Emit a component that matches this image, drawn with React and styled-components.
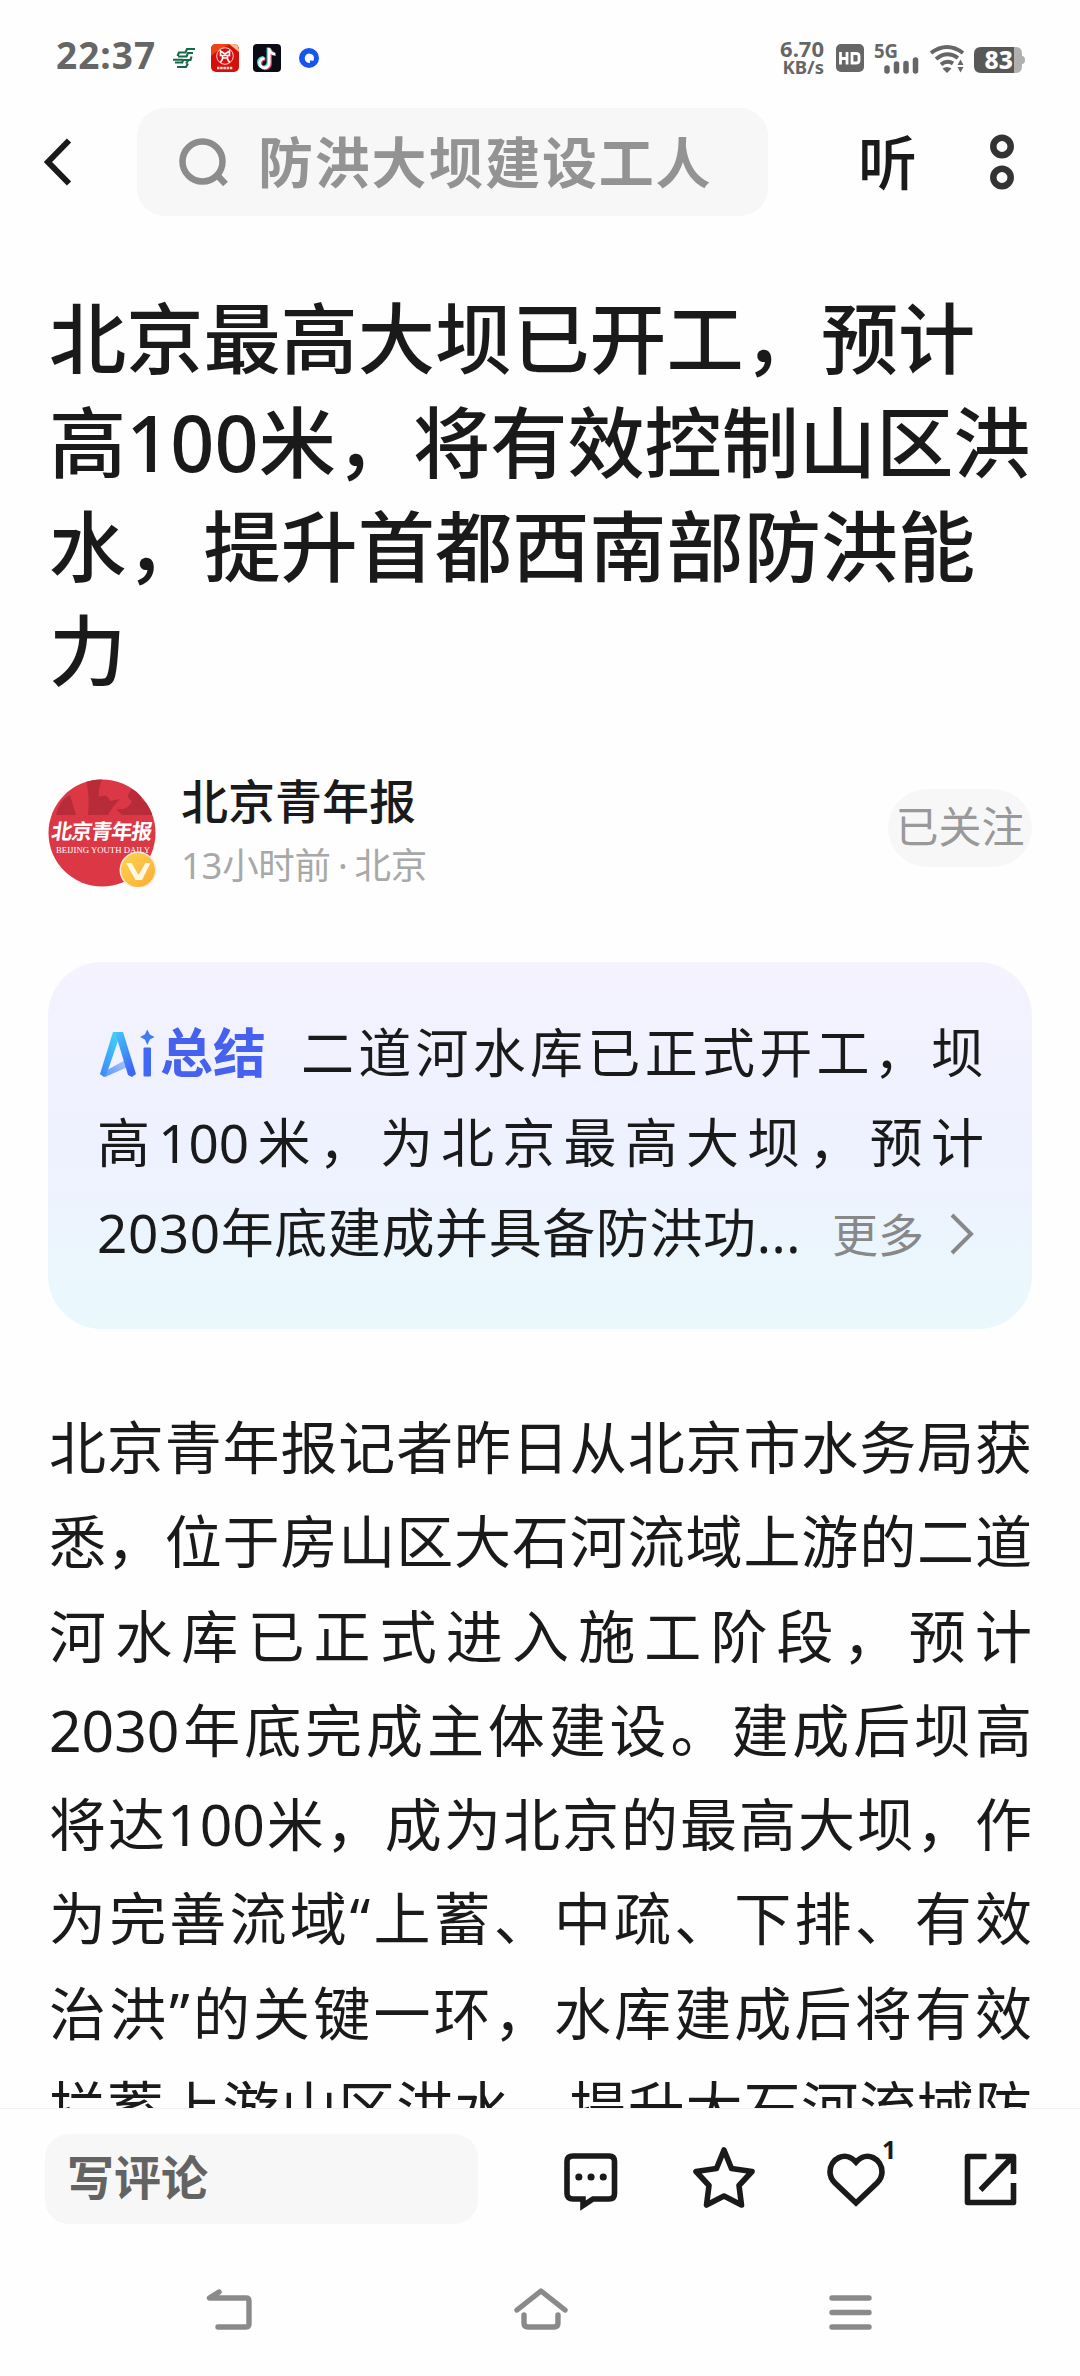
import React from 'react';
import styled, { createGlobalStyle } from 'styled-components';

const GlobalStyle = createGlobalStyle`
  body {
    margin: 0;
    background: #fefefe;
    font-family: 'Noto Sans', 'Noto Sans CJK SC', sans-serif;
    color: #1a1a1a;
  }
`
const Screen = styled.div`
  width: 1080px;
  height: 2376px;
  display: flex;
  flex-direction: column;
  overflow: hidden;
`
const StatusBar = styled.div`
  height: 78px;
  flex: none;
  box-sizing: border-box;
  padding: 0 55px 0 56px;
  display: flex;
  justify-content: space-between;
  color: #666;
`
const StatusSide = styled.div`
  display: flex;
  align-items: flex-start;
`
const Clock = styled.div`
  width: 117px;
  margin-top: 37px;
  font-size: 37px;
  font-weight: 700;
  line-height: 36px;
  letter-spacing: 1px;
`
const StatusIcon = styled.svg`
  display: block;
  flex: none;
  width: ${props => props.$w}px;
  height: ${props => props.$h}px;
  margin-left: ${props => props.$gap || 0}px;
  margin-top: ${props => props.$top}px;
  overflow: visible;
`
const Speed = styled.div`
  margin-top: 38px;
  width: 46px;
  text-align: right;
  font-size: 22px;
  line-height: 20px;
  font-weight: 700;
  white-space: nowrap;
`
const SpeedUnit = styled.div`
  font-size: 18.5px;
  line-height: 18px;
`
const Header = styled.div`
  height: 168px;
  flex: none;
  box-sizing: border-box;
  padding: 30px 66px 30px 43px;
  display: flex;
  align-items: center;
`
const SearchBox = styled.div`
  width: 631px;
  height: 108px;
  margin-left: 65px;
  box-sizing: border-box;
  padding-left: 42px;
  border-radius: 28px;
  background: #f7f7f7;
  display: flex;
  align-items: center;
  gap: 29px;
  font-size: 55px;
  font-weight: 700;
  letter-spacing: 1.8px;
  line-height: 108px;
  color: #939393;

  svg {
    margin-bottom: 1px;
  }
`
const Listen = styled.div`
  margin-left: 90px;
  width: 59px;
  font-size: 59px;
  line-height: 106px;
  font-weight: 500;
`
const MoreDots = styled.svg`
  display: block;
  margin-left: auto;
`
const Title = styled.h1`
  margin: 40px 48px 0 49px;
  font-size: 77.2px;
  line-height: 104px;
  font-weight: 500;
  flex: none;
`
const Line = styled.span`
  display: block;
  white-space: nowrap;
  text-align-last: ${props => props.$spread ? 'justify' : 'left'};
`
const Author = styled.div`
  margin: 77px 48px 0;
  height: 108px;
  flex: none;
  display: flex;
  align-items: center;
`
const AuthorText = styled.div`
  flex: 1;
  margin-left: 25px;
`
const AuthorName = styled.div`
  font-size: 47px;
  line-height: 64px;
  font-weight: 500;
`
const Posted = styled.div`
  font-size: 36.5px;
  line-height: 64px;
  letter-spacing: -0.3px;
  word-spacing: -2px;
  color: #a8a8a8;
`
const FollowButton = styled.div`
  width: 144px;
  height: 78px;
  margin-bottom: 11px;
  border-radius: 39px;
  background: #f7f7f7;
  color: #999;
  font-size: 43px;
  line-height: 75px;
  text-align: center;
  white-space: nowrap;
`
const Summary = styled.section`
  margin: 75px 48px 0;
  height: 367px;
  flex: none;
  box-sizing: border-box;
  padding: 46px 48px 0 49px;
  border-radius: 54px;
  background: linear-gradient(#f4f3fe 0%, #eff1fe 45%, #edf3fe 65%, #eaf7fc 88%, #eaf8fc 100%);
  font-size: 53px;
  line-height: 90px;
`
const SummaryRow = styled.div`
  display: flex;
  height: 90px;
`
const SummaryLabel = styled.div`
  display: flex;
  align-items: center;
  gap: 5px;
  width: 204px;
  font-weight: 700;
  color: #4661ee;
`
const SummaryText = styled.div`
  flex: 1;
  white-space: nowrap;
  letter-spacing: ${props => props.$tight ? '0.6px' : '0'};
  text-align-last: ${props => props.$tight ? 'left' : 'justify'};
`
const More = styled.div`
  display: flex;
  align-items: center;
  gap: 26px;
  padding: 2px 10px 0 0;
  font-size: 46px;
  color: #888;
`
const Story = styled.article`
  margin: 71px 48px 0 49px;
  height: 708px;
  flex: none;
  overflow: hidden;
  font-size: 57px;
  line-height: 94.3px;
`
const CommentBar = styled.div`
  height: 146px;
  flex: none;
  box-sizing: border-box;
  border-top: 1px solid #f2f2f2;
  padding: 25px 62px 0 45px;
  display: flex;
  align-items: flex-start;
`
const CommentInput = styled.div`
  width: 433px;
  height: 90px;
  box-sizing: border-box;
  padding-left: 22px;
  margin-right: 84px;
  border-radius: 24px;
  background: #f7f7f7;
  color: #636363;
  font-size: 47px;
  font-weight: 700;
  line-height: 86px;
`
const Actions = styled.div`
  flex: 1;
  height: 90px;
  display: flex;
  justify-content: space-between;
`
const ActionIcon = styled.svg`
  display: block;
  width: 66px;
  height: 90px;
  fill: none;
  stroke: #1a1a1a;
  stroke-width: 5.6px;
  overflow: visible;
`
const LikeButton = styled.div`
  position: relative;
`
const LikeCount = styled.span`
  position: absolute;
  left: 60px;
  top: 3px;
  font-size: 25px;
  line-height: 24px;
  font-weight: 700;
`
const NavBar = styled.div`
  flex: 1;
  display: flex;
  justify-content: space-between;
  padding: 31px 202px 0 203px;
`
const NavIcon = styled.svg`
  display: block;
  width: 54px;
  height: 54px;
  fill: none;
  stroke: #8a8a8a;
  stroke-width: 5.4px;
  stroke-linecap: round;
  stroke-linejoin: round;
`

const storyLines = [
  '北京青年报记者昨日从北京市水务局获',
  '悉，位于房山区大石河流域上游的二道',
  '河水库已正式进入施工阶段，预计',
  '2030年底完成主体建设。建成后坝高',
  '将达100米，成为北京的最高大坝，作',
  '为完善流域“上蓄、中疏、下排、有效',
  '治洪”的关键一环，水库建成后将有效',
  '拦蓄上游山区洪水，提升大石河流域防',
]

const titleLines = [
  '北京最高大坝已开工，预计',
  '高100米，将有效控制山区洪',
  '水，提升首都西南部防洪能',
  '力',
]

function Status() {
  return (
    <StatusBar>
      <StatusSide>
        <Clock>22:37</Clock>
        <StatusIcon viewBox="0 0 22 20" $w={22} $h={20} $top={48}>
          <path d="M22 1H14L12.500 4.500H6L4.500 8M20 5H15L13.500 8.500H5M18.500 8.500L17.500 12H10L9 15.500M0 11.800H10M2 14.500H9M15.500 12L13 15.500M4 19H13L15 15.500" fill="none" stroke="#17684b" strokeWidth="2.100" />
        </StatusIcon>
        <StatusIcon viewBox="0 0 28 28" $w={28} $h={28} $gap={16} $top={44}>
          <rect width="28" height="28" rx="5" fill="#d40f0c" />
          <path d="M0 12V5Q0 0 5 0H20Q9 4 0 12Z" fill="#ee4413" />
          <path d="M18 0H23Q28 0 28 8Z" fill="#f3c08b" />
          <circle cx="14" cy="12" r="8.300" fill="none" stroke="#fff" strokeWidth="0.8" />
          <path d="M9.500 7L14 10L18.500 7V11.500H9.500ZM11.500 12V15L9.500 18.500M16.500 12V15L18.500 18.500M11 14H17" fill="none" stroke="#fff" strokeWidth="1.600" />
          <path d="M6 24H22" stroke="#fbd0c8" strokeWidth="2.500" strokeDasharray="2.500 0.700" />
        </StatusIcon>
        <StatusIcon viewBox="0 0 28 28" $w={28} $h={28} $gap={14} $top={44}>
          <rect width="28" height="28" rx="4" fill="#0b0b15" />
          <g fill="none" strokeWidth="3.200">
            <path d="M15.200 3.500V18A4.800 4.800 0 1 1 10.500 13.500M15.200 4.500Q16.500 9 21 9.500" stroke="#43e0dc" />
            <path d="M17.200 5V19.500A4.800 4.800 0 1 1 12.500 15M17.200 5.500Q18.500 10.500 23 10.500" stroke="#ee4a68" />
            <path d="M16.200 4V18.800A4.800 4.800 0 1 1 11.500 14.300M16.200 5Q17.500 10 22 10" stroke="#fff" strokeWidth="2.700" />
          </g>
        </StatusIcon>
        <StatusIcon viewBox="0 0 20 20" $w={20} $h={20} $gap={18} $top={48}>
          <circle cx="10" cy="10" r="10" fill="#1557ee" />
          <path d="M10 5.500A4.500 4.500 0 1 0 11 15V12.500L14.500 12.800Q16.500 6 10 5.500Z" fill="#fff" />
        </StatusIcon>
      </StatusSide>
      <StatusSide>
        <Speed>6.70<SpeedUnit>KB/s</SpeedUnit></Speed>
        <StatusIcon viewBox="0 0 28 28" $w={28} $h={28} $gap={12} $top={44}>
          <rect width="28" height="28" rx="5" fill="#666" />
          <path d="M4.500 8V20.500M11 8V20.500M4.500 14.500H11M16 9.500H20Q23 9.500 23 12V16.500Q23 19 20 19H16Z" fill="none" stroke="#fff" strokeWidth="2.800" />
        </StatusIcon>
        <StatusIcon viewBox="0 0 45 31" $w={45} $h={31} $gap={10} $top={43}>
          <text x="0" y="14.500" fontSize="20" fontWeight="700" fill="#666" textLength="24" lengthAdjust="spacingAndGlyphs">5G</text>
          <path d="M13 25V28M22.500 21V28M32 20.500V28M41.500 17V28" stroke="#666" strokeWidth="5.500" strokeLinecap="round" />
        </StatusIcon>
        <StatusIcon viewBox="0 0 34 28" $w={34} $h={28} $gap={11} $top={45}>
          <path d="M1 8Q17 -4 33 8M6 14Q17 5 28 13M11 19.500Q17 14.500 23 18.500" fill="none" stroke="#666" strokeWidth="4" />
          <path d="M12.500 23.500Q17 20.500 21.500 23.500L17 28ZM27.500 20L30.500 14.500L33.500 20ZM27.500 22L30.500 27.500L33.500 22Z" fill="#666" />
        </StatusIcon>
        <StatusIcon viewBox="0 0 51 26" $w={51} $h={26} $gap={10} $top={47}>
          <path d="M38 0H42Q48 0 48 7V9Q51 9 51 13Q51 17 48 17V19Q48 26 42 26H38Z" fill="#b0b0b0" />
          <path d="M7 0H40V26H7Q0 26 0 19V7Q0 0 7 0Z" fill="#585858" />
          <text x="10.500" y="22" fontSize="24.500" fontWeight="800" fill="#fff">83</text>
        </StatusIcon>
      </StatusSide>
    </StatusBar>
  )
}

function TopBar() {
  return (
    <Header>
      <svg width="29" height="48" viewBox="0 0 29 48" fill="none" stroke="#1a1a1a" strokeWidth="6">
        <path d="M26 2.500L5 24L26 45.500" />
      </svg>
      <SearchBox>
        <svg width="50" height="50" viewBox="0 0 50 50" fill="none" stroke="#8c8c8c" strokeWidth="6.500">
          <circle cx="23.500" cy="24.500" r="20" />
          <path d="M38 38L46.500 47" />
        </svg>
        防洪大坝建设工人
      </SearchBox>
      <Listen>听</Listen>
      <MoreDots width="24" height="56" viewBox="0 0 24 56" fill="none" stroke="#333" strokeWidth="6.500">
        <circle cx="12" cy="12.500" r="8.700" />
        <circle cx="12" cy="43.500" r="8.700" />
      </MoreDots>
    </Header>
  )
}

function Avatar() {
  return (
    <svg width="108" height="108" viewBox="0 0 108 108">
      <defs>
        <clipPath id="face"><circle cx="54" cy="54" r="53.500" /></clipPath>
        <linearGradient id="gold" x1="0" y1="0" x2="1" y2="1">
          <stop offset="0" stopColor="#ffd34e" />
          <stop offset="1" stopColor="#f9ad35" />
        </linearGradient>
      </defs>
      <g clipPath="url(#face)">
        <rect width="108" height="108" fill="#dc3744" />
        <path d="M8 36Q12 20 22 16L28 36ZM38 0H54Q50 10 51 18Q60 14 62 22L72 20Q64 28 60 36H40Q42 18 38 0ZM68 30Q80 32 84 22Q76 18 84 10L94 14Q90 22 104 26V36H74Z" fill="#b82c39" />
        <text x="2" y="60" fontFamily="Noto Sans CJK SC" fontSize="21" fontWeight="700" fill="#fff" textLength="101" transform="skewX(-8) translate(9 0)">北京青年报</text>
        <text x="8" y="74" fontFamily="Liberation Serif" fontSize="8" fill="#fff" textLength="94" lengthAdjust="spacingAndGlyphs">BEIJING YOUTH DAILY</text>
      </g>
      <circle cx="90" cy="91" r="18.500" fill="#fbe9dc" />
      <circle cx="90" cy="91" r="17" fill="url(#gold)" />
      <path d="M78 84H83.500L90.500 96L97.500 84H102.500L94 101H87.500Z" fill="#fff8e6" />
    </svg>
  )
}

function AiSummary() {
  return (
    <Summary>
      <SummaryRow>
        <SummaryLabel>
          <svg width="58" height="50" viewBox="0 0 58 50">
            <defs>
              <linearGradient id="aiLeft" x1="0.8" y1="0" x2="0.2" y2="1">
                <stop offset="0" stopColor="#43d3f5" />
                <stop offset="1" stopColor="#3c8cfa" />
              </linearGradient>
              <linearGradient id="aiRight" x1="0" y1="0" x2="0.5" y2="1">
                <stop offset="0" stopColor="#44c8f8" />
                <stop offset="1" stopColor="#3f66f5" />
              </linearGradient>
              <linearGradient id="aiFold" x1="0" y1="0.6" x2="1" y2="0">
                <stop offset="0" stopColor="#5a9cfb" />
                <stop offset="1" stopColor="#b5cdfc" />
              </linearGradient>
            </defs>
            <path d="M3 46L30 31L33 38L8 49Z" fill="url(#aiFold)" />
            <path d="M16 4H24L10 45L7 49L3 46Z" fill="url(#aiLeft)" />
            <path d="M18 4H26L39 46L35 49L31 47Z" fill="url(#aiRight)" />
            <rect x="46.500" y="19.500" width="7.500" height="29" rx="1" fill="#3f68f5" />
            <path d="M50.300 1.500L52.800 6.500L57.500 9L52.800 11.500L50.300 17L47.800 11.500L43 9L47.800 6.500Z" fill="#3f7cf5" />
          </svg>
          总结
        </SummaryLabel>
        <SummaryText>二道河水库已正式开工，坝</SummaryText>
      </SummaryRow>
      <SummaryRow>
        <SummaryText>高100米，为北京最高大坝，预计</SummaryText>
      </SummaryRow>
      <SummaryRow>
        <SummaryText $tight>2030年底建成并具备防洪功...</SummaryText>
        <More>
          更多
          <svg width="24" height="42" viewBox="0 0 24 42" fill="none" stroke="#888" strokeWidth="4">
            <path d="M2 2L21 21L2 40" />
          </svg>
        </More>
      </SummaryRow>
    </Summary>
  )
}

function BottomBar() {
  return (
    <CommentBar>
      <CommentInput>写评论</CommentInput>
      <Actions>
        <ActionIcon viewBox="0 0 66 90">
          <path d="M11 22H47Q52.500 22 52.500 27.500V59.500Q52.500 65 47 65H31L21 71.500V65H11Q5 65 5 59.500V27.500Q5 22 11 22Z" />
          <path d="M16.800 43H16.900M29 43H29.100M41.200 43H41.300" strokeWidth="7" strokeLinecap="round" />
        </ActionIcon>
        <ActionIcon viewBox="0 0 66 90">
          <path d="M32 16L39.500 34.500L60 37.500L47 51.500L49.500 71L32 62L14.500 71L17 51.500L4 37.500L24.500 34.500Z" strokeLinejoin="round" />
        </ActionIcon>
        <LikeButton>
          <ActionIcon viewBox="0 0 66 90">
            <path d="M34 28C23 16 8 25 8 38Q8 44 13 49L34 69L55 49Q60 44 60 38C60 25 45 16 34 28Z" />
          </ActionIcon>
          <LikeCount>1</LikeCount>
        </LikeButton>
        <ActionIcon viewBox="0 0 66 90">
          <path d="M34.500 22.500H15.500V68.500H61.500V49M43.500 22.500H61.500V40M59.500 24L28.500 56" strokeLinejoin="round" />
        </ActionIcon>
      </Actions>
    </CommentBar>
  )
}

function SystemNav() {
  return (
    <NavBar>
      <NavIcon viewBox="0 0 54 54">
        <path d="M16 7L6.500 13H43Q46 13 46 16V39Q46 42 43 42H15" />
      </NavIcon>
      <NavIcon viewBox="0 0 54 54">
        <path d="M3 25L27 6L51 25M10 30V38Q10 42 14 42H40Q44 42 44 38V30" />
      </NavIcon>
      <NavIcon viewBox="0 0 54 54">
        <path d="M8 13H45M8 27.500H45M8 42H45" />
      </NavIcon>
    </NavBar>
  )
}

export default function App() {
  return (
    <Screen>
      <GlobalStyle />
      <Status />
      <TopBar />
      <Title>
        {titleLines.map(line => <Line key={line}>{line}</Line>)}
      </Title>
      <Author>
        <Avatar />
        <AuthorText>
          <AuthorName>北京青年报</AuthorName>
          <Posted>13小时前 · 北京</Posted>
        </AuthorText>
        <FollowButton>已关注</FollowButton>
      </Author>
      <AiSummary />
      <Story>
        {storyLines.map(line => <Line key={line} $spread>{line}</Line>)}
      </Story>
      <BottomBar />
      <SystemNav />
    </Screen>
  )
}
